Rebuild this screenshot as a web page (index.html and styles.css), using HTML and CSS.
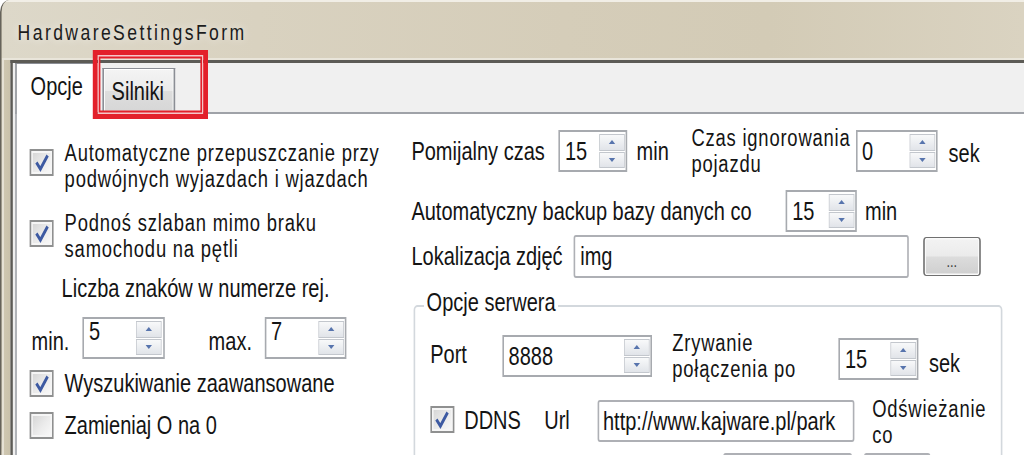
FILE: index.html
```html
<!DOCTYPE html>
<html lang="pl">
<head>
<meta charset="utf-8">
<title>HardwareSettingsForm</title>
<link rel="stylesheet" href="styles.css">
</head>
<body>
<div class="screen">
  <div class="window">
    <div class="titlebar"><span class="title">HardwareSettingsForm</span></div>
    <div class="frame">
      <div class="frame-left"></div>
      <div class="client">
        <div class="tabstrip">
          <div class="tab tab-active">Opcje</div>
          <div class="tab tab-idle">Silniki</div>
        </div>
        <div class="tabpage">
          <div class="col-left">
            <div class="cb-row row-a">
              <span class="cb"><svg class="tick" viewBox="0 0 25 23"><path d="M5.5 11.5 L10.5 18 L19.5 4.5"/></svg></span>
              <span class="lbl two">Automatyczne przepuszczanie przy<br>podwójnych wyjazdach i wjazdach</span>
            </div>
            <div class="cb-row row-b">
              <span class="cb"><svg class="tick" viewBox="0 0 25 23"><path d="M5.5 11.5 L10.5 18 L19.5 4.5"/></svg></span>
              <span class="lbl two">Podnoś szlaban mimo braku<br>samochodu na pętli</span>
            </div>
            <div class="row-c">Liczba znaków w numerze rej.</div>
            <div class="row-d">
              <span class="lbl-min">min.</span>
              <div class="spin spin-lt top-text"><span class="val">5</span><span class="btns"><i class="up"></i><i class="dn"></i></span></div>
              <span class="lbl-max">max.</span>
              <div class="spin spin-lt top-text"><span class="val">7</span><span class="btns"><i class="up"></i><i class="dn"></i></span></div>
            </div>
            <div class="cb-row single row-e">
              <span class="cb"><svg class="tick" viewBox="0 0 25 23"><path d="M5.5 11.5 L10.5 18 L19.5 4.5"/></svg></span>
              <span class="lbl">Wyszukiwanie zaawansowane</span>
            </div>
            <div class="cb-row single row-f">
              <span class="cb"></span>
              <span class="lbl">Zamieniaj O na 0</span>
            </div>
          </div>

          <div class="col-right">
            <div class="r-row r1">
              <span class="l-pom">Pomijalny czas</span>
              <div class="spin sp-r1"><span class="val">15</span><span class="btns"><i class="up"></i><i class="dn"></i></span></div>
              <span class="u-min">min</span>
              <span class="l-czas two">Czas ignorowania<br>pojazdu</span>
              <div class="spin sp-r2"><span class="val">0</span><span class="btns"><i class="up"></i><i class="dn"></i></span></div>
              <span class="u-sek">sek</span>
            </div>
            <div class="r-row r2">
              <span class="l-backup">Automatyczny backup bazy danych co</span>
              <div class="spin sp-r3"><span class="val">15</span><span class="btns"><i class="up"></i><i class="dn"></i></span></div>
              <span class="u-min2">min</span>
            </div>
            <div class="r-row r3">
              <span class="l-lok">Lokalizacja zdjęć</span>
              <div class="tb tb-img">img</div>
              <div class="btn-browse">...</div>
            </div>

            <fieldset class="group">
              <legend>Opcje serwera</legend>
              <div class="grp-body">
                <div class="g-row g1">
                  <span class="l-port">Port</span>
                  <div class="spin sp-port"><span class="val">8888</span><span class="btns"><i class="up"></i><i class="dn"></i></span></div>
                  <span class="l-zryw two">Zrywanie<br>połączenia po</span>
                  <div class="spin sp-zryw"><span class="val">15</span><span class="btns"><i class="up"></i><i class="dn"></i></span></div>
                  <span class="u-sek2">sek</span>
                </div>
                <div class="g-row g2">
                  <span class="cb cb-ddns"><svg class="tick" viewBox="0 0 25 23"><path d="M5.5 11.5 L10.5 18 L19.5 4.5"/></svg></span>
                  <span class="l-ddns">DDNS</span>
                  <span class="l-url">Url</span>
                  <div class="tb tb-url">http://www.kajware.pl/park</div>
                  <span class="l-odsw two">Odświeżanie<br>co</span>
                </div>
                <div class="g-row g3">
                  <div class="tb tb-low"></div>
                  <div class="tb tb-low2"></div>
                </div>
              </div>
            </fieldset>
          </div>
        </div>
      </div>
    </div>
  </div>
  <div class="highlight"></div>
</div>
</body>
</html>
```

FILE: styles.css
```css
html, body {
  margin: 0;
  padding: 0;
  width: 1024px;
  height: 455px;
  overflow: hidden;
  background: #ffffff;
}

/* The reference is stretched more vertically than horizontally:
   layout is done in a 1280px-wide space and squeezed to 1024px. */
.screen {
  position: relative;
  width: 1280px;
  height: 455px;
  overflow: hidden;
  transform: scaleX(0.8);
  transform-origin: 0 0;
  font-family: "Liberation Sans", Arial, sans-serif;
  font-size: 25px;
  color: #141414;
}

.window {
  height: 455px;
  display: flex;
  flex-direction: column;
  border-left: 2.5px solid #66635b;
  border-top-left-radius: 12px;
  overflow: hidden;
  background: #cfc7b1;
}

/* ---------- title bar ---------- */
.titlebar {
  box-sizing: border-box;
  height: 60px;
  flex: none;
  border-top: 2px solid #f1eee6;
  border-bottom: 2px solid #e9e5da;
  padding: 6px 0 0 20px;
  background: linear-gradient(90deg, #ddd8c9 0%, #d9d2c0 25%, #d5cdb9 55%, #d3cbb6 75%, #dad3c1 100%);
}

.title {
  display: inline-block;
  font-size: 22px;
  line-height: 50px;
  letter-spacing: 3px;
  color: #1c1c1c;
  text-shadow: 0 0 10px rgba(255, 255, 255, 0.75);
}

/* ---------- frame & client ---------- */
.frame {
  flex: 1;
  display: flex;
  min-height: 0;
}

.frame-left {
  width: 11.25px;
  flex: none;
  background: linear-gradient(90deg, #e6e1d4 0, #e6e1d4 2.5px, #cfc7b1 2.5px, #c9c1aa 100%);
}

.client {
  flex: 1;
  display: flex;
  flex-direction: column;
  border-top: 3px solid #5c5b56;
  border-left: 3.75px solid #5c5b56;
  background: #f0f0f0;
  padding-left: 2.5px;
  min-height: 0;
}

/* ---------- tabs ---------- */
.tabstrip {
  height: 49px;
  flex: none;
  display: flex;
  align-items: flex-end;
}

.tab {
  box-sizing: border-box;
  border: 1.5px solid #8b8e95;
  border-left-width: 2.5px;
  border-right-width: 2.5px;
  border-bottom: 0;
  line-height: 23px;
  padding-top: 10.5px;
}

.tab-active {
  position: relative;
  z-index: 1;
  width: 101.25px;
  height: 51px;
  margin-bottom: -2px;
  padding-left: 17.5px;
  background: #ffffff;
}

.tab-idle {
  width: 91.25px;
  height: 44px;
  margin-left: 7.5px;
  padding-left: 10px;
  background: linear-gradient(#f4f4f4 0%, #ebebeb 50%, #dedede 52%, #d6d6d6 100%);
  box-shadow: inset 0 1px 0 #ffffff, inset 1.25px 0 0 #fbfbfb, inset -1.25px 0 0 #fbfbfb;
}

.tabpage {
  flex: 1;
  display: flex;
  border-top: 2px solid #9fa2a8;
  border-left: 2.5px solid #9fa2a8;
  background: #ffffff;
  min-height: 0;
}

/* two-line labels: slightly smaller type so the lines do not collide */
.two {
  font-size: 23px;
  letter-spacing: 1px;
  line-height: 26px;
  white-space: nowrap;
}

/* ---------- shared controls ---------- */
.cb {
  box-sizing: border-box;
  flex: none;
  width: 30px;
  height: 27px;
  display: flex;
  align-items: center;
  justify-content: center;
  border: 2px solid #8f9090;
  border-left-width: 2.5px;
  border-right-width: 2.5px;
  background: linear-gradient(135deg, #d3d3d3 0%, #ececec 55%, #fafafa 100%);
  box-shadow: inset 0 0 0 2px #f6f6f6;
}

.tick {
  width: 25px;
  height: 23px;
}

.tick path {
  fill: none;
  stroke: #3d5aa2;
  stroke-width: 3.4;
  stroke-linejoin: miter;
}

.spin {
  box-sizing: border-box;
  flex: none;
  height: 42px;
  display: flex;
  align-items: center;
  border: 2px solid #a7aaaf;
  border-left-width: 2.5px;
  border-right-width: 2.5px;
  background: #ffffff;
}

.spin .val {
  flex: 1;
  padding-left: 6px;
  line-height: 23px;
  white-space: nowrap;
}

.spin.top-text {
  align-items: flex-start;
}

.spin.top-text .val {
  padding-top: 1px;
}

.btns {
  align-self: stretch;
  flex: none;
  width: 32px;
  margin: 2px 1.5px 2px 0;
  display: flex;
  flex-direction: column;
  gap: 1px;
}

.btns i {
  flex: 1;
  display: flex;
  align-items: center;
  justify-content: center;
  border: 1px solid #c3c7cd;
  border-left-width: 1.25px;
  border-right-width: 1.25px;
  background: linear-gradient(#f8f9fa, #e1e4e9);
}

.btns i::after {
  content: "";
  width: 0;
  height: 0;
  border-left: 4.5px solid transparent;
  border-right: 4.5px solid transparent;
}

.btns .up::after {
  border-bottom: 4px solid #5774ad;
}

.btns .dn::after {
  border-top: 4px solid #5774ad;
}

.tb {
  box-sizing: border-box;
  flex: none;
  height: 43px;
  display: flex;
  align-items: center;
  padding-left: 6px;
  border: 2px solid #aeb0b5;
  border-left-width: 2.5px;
  border-right-width: 2.5px;
  border-radius: 3px;
  background: #ffffff;
  line-height: 23px;
  white-space: nowrap;
  overflow: hidden;
}

/* ---------- left column ---------- */
.col-left {
  width: 493.5px;
  flex: none;
  padding-top: 25.5px;
}

.cb-row {
  display: flex;
  align-items: flex-start;
  padding-left: 16.25px;
}

.cb-row .lbl {
  margin-left: 13.75px;
  line-height: 23px;
  white-space: nowrap;
}

.cb-row .lbl.two {
  line-height: 26px;
}

.row-a .cb { margin-top: 9.5px; }

.row-b {
  margin-top: 18px;
}
.row-b .cb { margin-top: 10.5px; }

.cb-row.single {
  align-items: center;
  height: 27px;
}

.row-c {
  margin-top: 15.5px;
  padding-left: 56.25px;
  line-height: 23px;
}

.row-d {
  display: flex;
  align-items: flex-start;
  margin-top: 17px;
}

.lbl-min {
  width: 63.75px;
  margin-left: 18.75px;
  margin-top: 13px;
  line-height: 23px;
}

.lbl-max {
  width: 70px;
  margin-left: 55px;
  margin-top: 13px;
  line-height: 23px;
}

.spin-lt {
  width: 102.5px;
}

.row-e { margin-top: 11px; }
.row-f { margin-top: 15px; }

/* ---------- right column ---------- */
.col-right {
  flex: 1;
  padding-top: 11px;
}

.r-row {
  display: flex;
  align-items: center;
  line-height: 23px;
  white-space: nowrap;
}

.r1 { height: 52px; }
.l-pom { width: 184px; }
.sp-r1 { width: 86px; }
.u-min { width: 68.5px; margin-left: 11.5px; }
.l-czas { width: 205.25px; }
.sp-r2 { width: 102.5px; }
.u-sek { margin-left: 13.75px; margin-top: 4px; }

.r2 { margin-top: 13px; }
.l-backup { width: 468px; }
.sp-r3 { width: 89px; }
.u-min2 { margin-left: 10px; }

.r3 { margin-top: 3px; }
.l-lok { width: 203px; }
.tb-img { width: 418.75px; }

.btn-browse {
  box-sizing: border-box;
  width: 72.5px;
  height: 39px;
  margin-left: 17.5px;
  display: flex;
  align-items: flex-end;
  justify-content: center;
  padding-bottom: 7px;
  border: 1.5px solid #707070;
  border-left-width: 2px;
  border-right-width: 2px;
  border-radius: 4px;
  background: linear-gradient(#f3f3f3 0%, #ebebeb 48%, #dcdcdc 52%, #cfcfcf 100%);
  box-shadow: inset 0 0 0 1.5px #fafafa;
  font-size: 16px;
  line-height: 12px;
  color: #3a3a3a;
}

/* ---------- server group ---------- */
.group {
  box-sizing: border-box;
  width: 736px;
  min-width: 0;
  margin: 12.5px 0 0 3px;
  padding: 8px 0 20px 0;
  border: 2px solid #d3d8dd;
  border-left-width: 2.5px;
  border-right-width: 2.5px;
  border-radius: 5px;
}

.group legend {
  margin-left: 11px;
  padding: 0 3px 8px;
  line-height: 23px;
}

.grp-body {
  padding-left: 18.5px;
}

.g-row {
  display: flex;
  align-items: flex-start;
  line-height: 23px;
  white-space: nowrap;
}

.l-port { width: 90px; margin-top: 13.5px; }
.sp-port { width: 187.5px; margin-top: 5.5px; }
.l-zryw { width: 208px; margin-left: 25px; }
.sp-zryw { width: 100px; margin-top: 8.5px; }
.u-sek2 { margin-left: 13px; margin-top: 22.5px; }

.g2 { margin-top: 14.5px; }
.cb-ddns { margin-top: 10px; }
.l-ddns { width: 100px; margin-left: 12.5px; margin-top: 13px; }
.l-url { width: 66.5px; margin-top: 13px; }
.tb-url { width: 321px; height: 42px; margin-top: 4px; padding-left: 5px; }
.l-odsw { margin-left: 22.5px; }

.g3 { margin-top: 5px; }
.tb-low { width: 161px; margin-left: 366px; }
.tb-low2 { width: 83px; margin-left: 15px; }

/* ---------- red annotation ---------- */
.highlight {
  position: absolute;
  left: 116.25px;
  top: 50px;
  width: 143.75px;
  height: 69px;
  box-sizing: border-box;
  border: 5px solid #e3202a;
  border-left-width: 6.25px;
  border-right-width: 6.25px;
  box-shadow: inset 0 0 0 1.5px #f5c6c8, inset 0 0 0 3.5px #e3202a;
  z-index: 5;
}
```
